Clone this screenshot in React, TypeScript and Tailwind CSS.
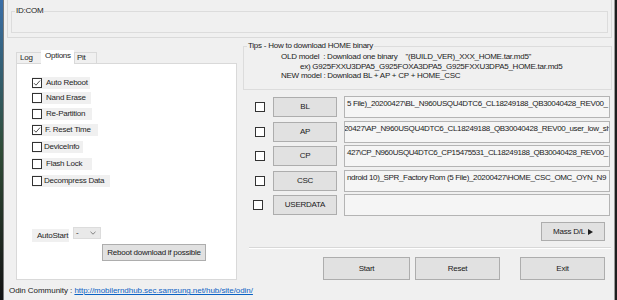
import { ReactNode } from 'react'

function CheckBox({ checked = false }: { checked?: boolean }) {
  return (
    <span className="flex h-[10px] w-[10px] shrink-0 items-center justify-center border border-[#333] bg-white">
      {checked && (
        <svg width="8" height="8" viewBox="0 0 8 8">
          <path d="M1 4.2 L3 6.2 L7 1.6" stroke="#3a3a3a" strokeWidth="0.9" fill="none" />
        </svg>
      )}
    </span>
  )
}

function WinButton({ className, children }: { className: string; children: ReactNode }) {
  return (
    <div className={`flex shrink-0 items-center justify-center border border-[#adadad] bg-[#e1e1e1] text-[#1a1a1a] ${className}`}>
      {children}
    </div>
  )
}

const options = [
  { label: 'Auto Reboot', checked: true, cls: 'mt-[13px] w-[58px]', gap: 'ml-[4px]' },
  { label: 'Nand Erase', checked: false, cls: 'mt-[3px] w-[59px]', gap: 'ml-[4px]' },
  { label: 'Re-Partition', checked: false, cls: 'mt-[4px] w-[60px]', gap: 'ml-[4px]' },
  { label: 'F. Reset Time', checked: true, cls: 'mt-[4px] w-[66px]', gap: 'ml-[3px]' },
  { label: 'DeviceInfo', checked: false, cls: 'mt-[5px] w-[51px]', gap: 'ml-[2px]' },
  { label: 'Flash Lock', checked: false, cls: 'mt-[5px] w-[60px]', gap: 'ml-[4px]' },
  { label: 'Decompress Data', checked: false, cls: 'mt-[5px] w-[78px]', gap: 'ml-[2px]' }
]

// only the visible middle part of each path is shown, as in the dialog
const files = [
  { name: 'BL', text: '5 File)_20200427\\BL_N960USQU4DTC6_CL18249188_QB30040428_REV00_', cls: 'ml-0 tracking-[-0.35px]' },
  { name: 'AP', text: '20427\\AP_N960USQU4DTC6_CL18249188_QB30040428_REV00_user_low_sh', cls: '-ml-[3px] tracking-[-0.35px]' },
  { name: 'CP', text: '427\\CP_N960USQU4DTC6_CP15475531_CL18249188_QB30040428_REV00_', cls: 'ml-0 tracking-[-0.42px]' },
  { name: 'CSC', text: 'ndroid 10)_SPR_Factory Rom (5 File)_20200427\\HOME_CSC_OMC_OYN_N9', cls: 'ml-0 tracking-[-0.35px]' },
  { name: 'USERDATA', text: '', cls: 'ml-0' }
]

export default function App() {
  return (
    <div className="flex h-[300px] w-[617px] overflow-hidden bg-[#f0f0f0] font-['Liberation_Sans',Arial,sans-serif] text-[8px] leading-[10px] tracking-[-0.25px] text-[#1e1e1e]">
      {/* desktop showing at the left edge */}
      <div className="w-[3px] shrink-0 bg-gradient-to-b from-[#3b6fa8] via-[#2f4b36] to-[#141414]" />
      <div className="w-[1px] shrink-0 bg-[#7a7a7a]" />

      <div className="flex w-[610px] shrink-0 flex-col">
        {/* top group */}
        <div className="ml-[3px] h-[38px] w-[605px] border-x border-b border-[#dadada]">
          <fieldset className="ml-[3px] mt-[6px] h-[27px] w-[597px] border border-[#dcdcdc]">
            <legend className="ml-[3px] px-[1px] text-[#222]">ID:COM</legend>
          </fieldset>
        </div>

        {/* body */}
        <div className="flex h-[244px]">
          {/* left tabs */}
          <div className="ml-[12px] flex w-[221px] shrink-0 flex-col pt-[12px]">
            <div className="flex h-[13px] items-end">
              <div className="flex h-[11px] w-[25px] items-center border-l border-t border-[#d9d9d9] pl-[3px]">Log</div>
              <div className="z-10 -mb-[1px] flex h-[14px] w-[33px] items-start bg-white pl-[4px] pt-[1px]">Options</div>
              <div className="flex h-[11px] w-[23px] items-center border-x border-t border-[#d9d9d9] pl-[2px]">Pit</div>
            </div>
            <div className="flex h-[217px] flex-col border border-[#d9d9d9] bg-white pl-[15px]">
              {options.map(o => (
                <div key={o.label} className={`flex h-[12px] items-center bg-[#f0f0f0] ${o.cls}`}>
                  <CheckBox checked={o.checked} />
                  <span className={o.gap}>{o.label}</span>
                </div>
              ))}
              <div className="mt-[40px] flex h-[15px] items-start">
                <div className="mt-[2px] flex h-[13px] w-[37px] items-center bg-[#f0f0f0] pl-[5px]">AutoStart</div>
                <div className="ml-[4px] flex h-[12px] w-[28px] items-center justify-between border border-[#dcdcdc] bg-[#e9e9e9] pl-[2px] pr-[4px]">
                  <span>-</span>
                  <svg width="6" height="4" viewBox="0 0 6 4">
                    <path d="M0.5 0.8 L3 3.2 L5.5 0.8" stroke="#666" strokeWidth="0.8" fill="none" />
                  </svg>
                </div>
              </div>
              <WinButton className="ml-[70px] mt-[2px] h-[17px] w-[104px]">Reboot download if possible</WinButton>
            </div>
          </div>

          {/* right side */}
          <div className="ml-[6px] flex w-[369px] shrink-0 flex-col">
            <fieldset className="mt-[3px] h-[49px] w-[369px] border border-[#dcdcdc] text-[#222]">
              <legend className="ml-[3px] px-[1px]">Tips - How to download HOME binary</legend>
              <div className="mt-[1px] pl-[37px] leading-[9.5px]">
                <div className="whitespace-pre">OLD model  : Download one binary    "(BUILD_VER)_XXX_HOME.tar.md5"</div>
                <div className="pl-[19px]">ex) G925FXXU3DPA5_G925FOXA3DPA5_G925FXXU3DPA5_HOME.tar.md5</div>
                <div>NEW model : Download BL + AP + CP + HOME_CSC</div>
              </div>
            </fieldset>

            <div className="mt-[6px] flex flex-col gap-[2.5px]">
              {files.map(f => (
                <div key={f.name} className="flex h-[22px] items-center">
                  <div className={f.name === 'USERDATA' ? 'ml-[10px]' : 'ml-[12px]'}>
                    <CheckBox />
                  </div>
                  <WinButton className={`h-[20px] w-[64px] ${f.name === 'USERDATA' ? 'ml-[10px] h-[18px]' : 'ml-[8px]'}`}>
                    {f.name}
                  </WinButton>
                  <div className="ml-[7px] h-[22px] w-[266px] overflow-hidden whitespace-nowrap border border-[#b4b4b4] bg-[#f5f5f5] pl-[2px] pt-[2px] text-[#222]">
                    <div className={f.cls}>{f.text}</div>
                  </div>
                </div>
              ))}
            </div>

            <WinButton className="ml-[298px] mt-[6px] h-[19px] w-[64px] gap-[3px]">
              <span>Mass D/L</span>
              <svg width="5" height="6" viewBox="0 0 5 6">
                <path d="M0 0 L5 3 L0 6 Z" fill="#1e1e1e" />
              </svg>
            </WinButton>

            <div className="ml-[6px] mt-[6px] h-[2px] w-[362px] border-b border-t border-b-white border-t-[#d8d8d8]" />

            <div className="mt-[8px] flex">
              <WinButton className="ml-[80px] h-[23px] w-[87px]">Start</WinButton>
              <WinButton className="ml-[5px] h-[23px] w-[85px]">Reset</WinButton>
              <WinButton className="ml-[20px] h-[23px] w-[85px]">Exit</WinButton>
            </div>
          </div>
        </div>

        {/* footer */}
        <div className="flex h-[18px] items-center pl-[5px] tracking-[-0.05px] text-[#222]">
          <span className="whitespace-pre">Odin Community : </span>
          <a className="text-[#0b62c4] underline" href="#">
            http://mobilerndhub.sec.samsung.net/hub/site/odin/
          </a>
        </div>
      </div>

      <div className="w-[1px] shrink-0 bg-[#9a9a9a]" />
      <div className="w-[2px] shrink-0 bg-[#1e1e1e]" />
    </div>
  )
}
